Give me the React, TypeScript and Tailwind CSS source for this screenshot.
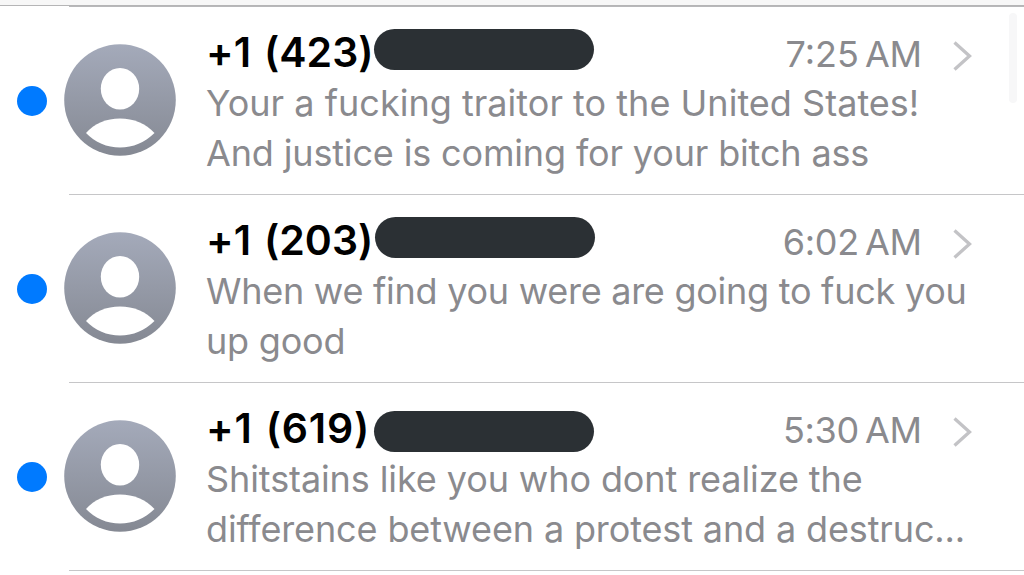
import React from "react";

type Line = { text: string; className: string };
type Message = {
  number: string;
  numberClass: string;
  pillClass: string;
  time: string;
  timeClass: string;
  lines: Line[];
};

const messages: Message[] = [
  {
    number: "+1 (423)",
    numberClass: "tracking-[0.05px] [word-spacing:2.5px]",
    pillClass: "left-[168px] top-[1.5px]",
    time: "7:25",
    timeClass: "tracking-[0px]",
    lines: [
      { text: "Your a fucking traitor to the United States!", className: "tracking-[0.02px]" },
      { text: "And justice is coming for your bitch ass", className: "tracking-[-0.15px]" },
    ],
  },
  {
    number: "+1 (203)",
    numberClass: "tracking-[0.05px] [word-spacing:2.5px]",
    pillClass: "left-[169px] top-[1.5px]",
    time: "6:02",
    timeClass: "tracking-[-0.3px]",
    lines: [
      { text: "When we find you were are going to fuck you", className: "tracking-[-0.26px]" },
      { text: "up good", className: "tracking-[-0.2px]" },
    ],
  },
  {
    number: "+1 (619)",
    numberClass: "tracking-[0.8px] [word-spacing:2px]",
    pillClass: "left-[168px] top-[7.5px]",
    time: "5:30",
    timeClass: "tracking-[-0.3px]",
    lines: [
      { text: "Shitstains like you who dont realize the", className: "tracking-[-0.1px]" },
      { text: "difference between a protest and a destruc...", className: "tracking-[-0.13px]" },
    ],
  },
];

function Avatar() {
  return (
    <svg className="mt-[37px] ml-[17px] h-28 w-28 shrink-0" viewBox="0 0 112 112" aria-hidden="true">
      <defs>
        <linearGradient id="avatar" x1="0" y1="0" x2="0" y2="1">
          <stop offset="0" stopColor="#a4aaba" />
          <stop offset="1" stopColor="#858993" />
        </linearGradient>
      </defs>
      <circle cx="56" cy="56" r="55.8" fill="url(#avatar)" />
      <ellipse cx="56" cy="44.7" rx="19.2" ry="20.8" fill="#fff" />
      <path d="M22 89C30 79.500 42.500 74.500 56 74.500S82 79.500 90.500 89C81 98.500 69 103.500 56 103.500S31 98.500 22 89Z" fill="#fff" />
    </svg>
  );
}

function Row({ message }: { message: Message }) {
  return (
    <li className="flex h-[188px]">
      <span className="mt-[79px] ml-[17px] h-[30px] w-[30px] shrink-0 rounded-full bg-[#007aff]" />
      <Avatar />
      <div className="ml-[30px] min-w-0 flex-1 pt-5">
        <div className="relative flex h-[51px] items-baseline leading-[51px] whitespace-nowrap">
          <span className={`text-[41px] font-semibold text-black ${message.numberClass}`}>{message.number}</span>
          <span className={`absolute h-[41.5px] w-[219.5px] rounded-full bg-[#2b3034] ${message.pillClass}`} />
          <span className={`mr-[102.5px] ml-auto text-[36px] text-[#8a8a8e] ${message.timeClass}`}>
            {message.time}
            <span className="ml-[6px] tracking-[-0.4px]">AM</span>
          </span>
          <svg className="absolute top-[13px] right-[51px] h-[32px] w-[22px]" viewBox="0 0 22 32" fill="none" aria-hidden="true">
            <path d="M3.500 2.500L18.500 16L3.500 29.500" stroke="#c3c3c6" strokeWidth="3.300" />
          </svg>
        </div>
        {message.lines.map((line) => (
          <p key={line.text} className="h-[50px] text-[36px] leading-[50px] whitespace-nowrap text-[#8a8a8e]">
            <span className={line.className}>{line.text}</span>
          </p>
        ))}
      </div>
    </li>
  );
}

export default function App() {
  return (
    <main className="relative h-[575px] w-[1024px] overflow-hidden bg-white font-[Inter,sans-serif]">
      <div className="h-[6px] border-b border-[#b5b5b6] bg-[#f7f7f7]" />
      <div className="ml-[69px] h-px bg-[#b8b8ba]" />
      <ul>
        {messages.map((message) => (
          <React.Fragment key={message.number}>
            <Row message={message} />
            <li className="-mt-px ml-[69px] h-px bg-[#c6c6c8]" />
          </React.Fragment>
        ))}
      </ul>
      <div className="absolute top-[13px] right-[7px] h-[90px] w-[8px] rounded-full bg-[#f7f7f8]" />
    </main>
  );
}
